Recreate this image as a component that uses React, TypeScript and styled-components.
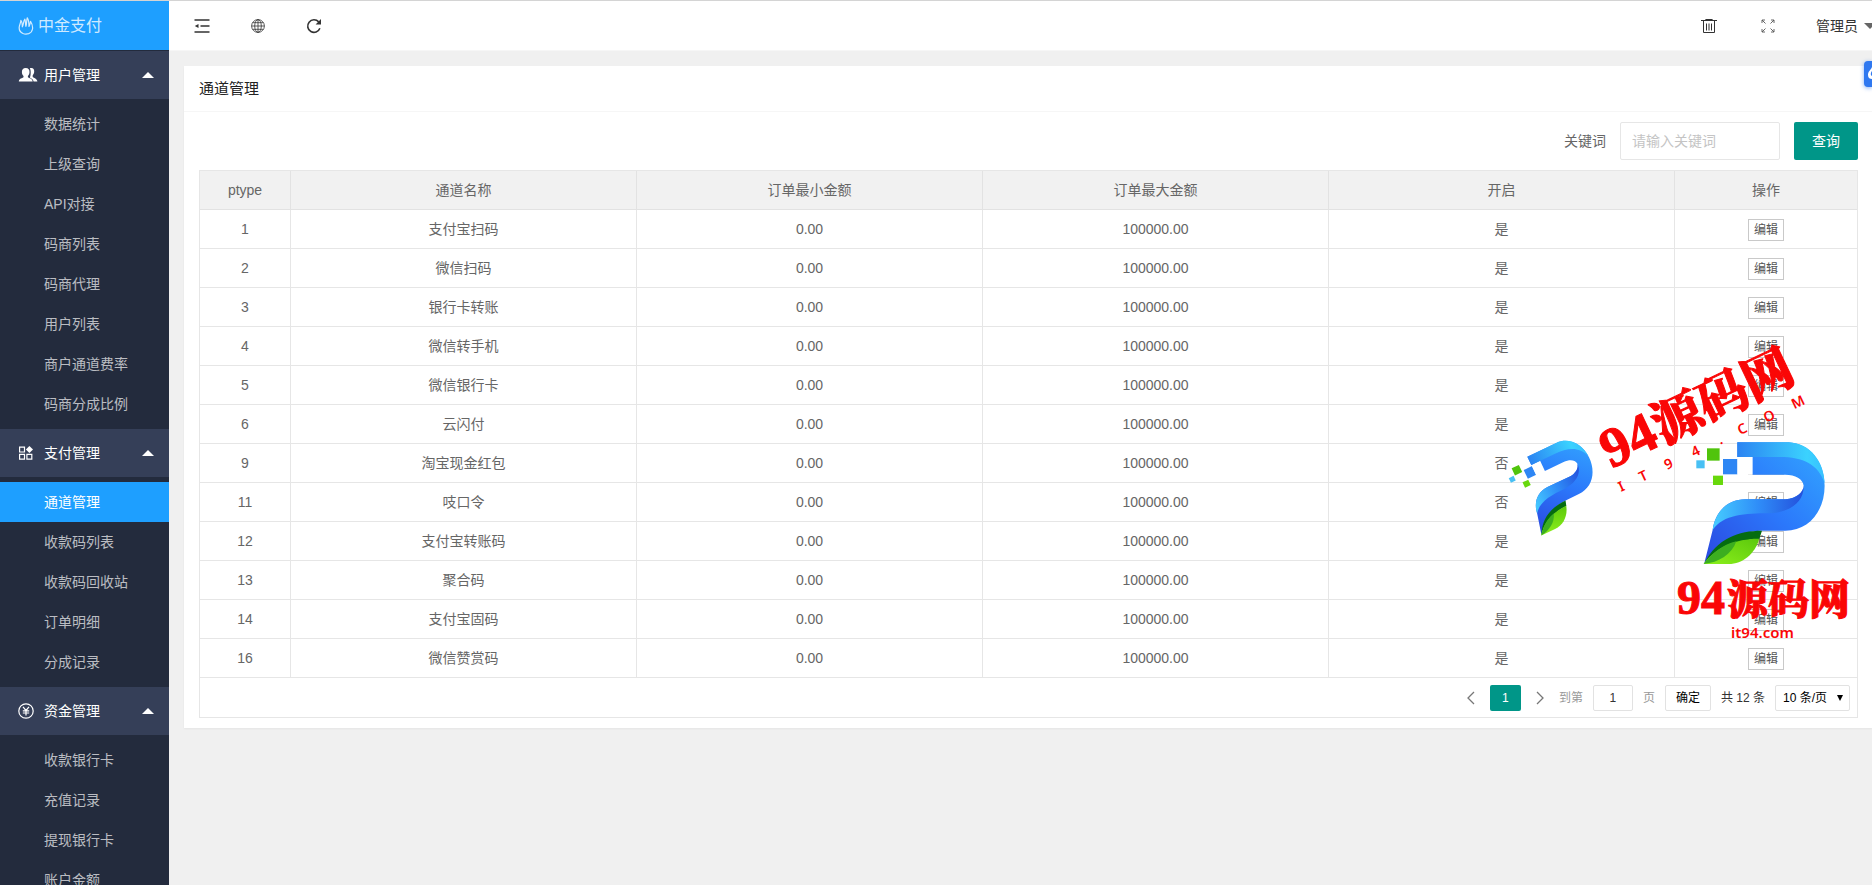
import React from "react";
import styled, { createGlobalStyle } from "styled-components";

const GlobalStyle = createGlobalStyle`
  *, *::before, *::after { box-sizing: border-box; }
  body {
    margin: 0;
    background: #f0f0f0;
    color: #666;
    font: 14px/24px "Liberation Sans", "Noto Sans CJK SC", sans-serif;
  }
  button, input, select { font: inherit; color: inherit; }
  a { color: inherit; text-decoration: none; }
  ul { list-style: none; margin: 0; padding: 0; }
`;

const Shell = styled.div`
  position: relative;
  display: flex;
  height: 100vh;
  overflow: hidden;
  border: 0 solid #d4d4d4;
  border-top-width: 1px;
`;

const Sidebar = styled.aside`
  flex: none;
  width: 169px;
  overflow: hidden;
  background: #232b3d;
`;

const Brand = styled.a`
  display: flex;
  align-items: center;
  gap: 4px;
  height: 49px;
  margin-bottom: 1px;
  padding: 0 18px;
  background: #1e9fff;
  color: rgba(255, 255, 255, 0.8);
  font-size: 16px;
`;

const GroupToggle = styled.button`
  display: flex;
  align-items: center;
  width: 100%;
  height: 48px;
  padding: 0 15px 0 18px;
  border: 0;
  background: #353f58;
  color: #fff;
  text-align: left;
`;

const GroupIcon = styled.span`
  display: flex;
  width: 26px;
`;

const GroupName = styled.span`
  flex: 1;
`;

const SubMenu = styled.ul`
  padding: 5px 0;
`;

const MenuLink = styled.a<{ $active?: boolean }>`
  display: block;
  height: 40px;
  padding-left: 44px;
  line-height: 40px;
  white-space: nowrap;
  background: ${(p) => (p.$active ? "#1e9fff" : "transparent")};
  color: ${(p) => (p.$active ? "#fff" : "rgba(255, 255, 255, 0.7)")};
`;

const Main = styled.main`
  flex: 1;
  min-width: 0;
`;

const Toolbar = styled.header`
  display: flex;
  justify-content: space-between;
  height: 50px;
  padding-left: 5px;
  overflow: hidden;
  background: #fff;
  border-bottom: 1px solid #f6f6f6;
  color: #333;
`;

const Tools = styled.div`
  display: flex;
  align-items: center;
`;

const AccountTools = styled(Tools)`
  gap: 3px;
  margin-right: -4px;
`;

const ToolButton = styled.button`
  display: flex;
  align-items: center;
  justify-content: center;
  width: 56px;
  height: 48px;
  padding: 0;
  border: 0;
  background: none;
`;

const UserButton = styled.button`
  display: flex;
  align-items: center;
  gap: 6px;
  padding: 0 0 0 17px;
  border: 0;
  background: none;
  white-space: nowrap;
`;

const Card = styled.section`
  margin: 15px 0 0 15px;
  background: #fff;
  box-shadow: 0 1px 2px rgba(0, 0, 0, 0.05);
`;

const CardTitle = styled.h1`
  margin: 0;
  padding: 0 15px;
  height: 46px;
  border-bottom: 1px solid #f6f6f6;
  color: #222;
  font-size: 15px;
  font-weight: 400;
  line-height: 46px;
`;

const CardBody = styled.div`
  padding: 10px 14px 10px 15px;
`;

const SearchForm = styled.form`
  display: flex;
  align-items: center;
  justify-content: flex-end;
  gap: 14px;
  margin-bottom: 10px;
`;

const KeywordInput = styled.input`
  width: 160px;
  height: 38px;
  padding: 0 11px;
  border: 1px solid #e6e6e6;
  border-radius: 2px;
  outline: none;
  &::placeholder { color: #c4c4c4; }
`;

const SearchButton = styled.button`
  width: 64px;
  height: 38px;
  padding: 0;
  border: 0;
  border-radius: 2px;
  background: #009688;
  color: #fff;
`;

const TableFrame = styled.div`
  border: 1px solid #e6e6e6;
`;

const DataTable = styled.table`
  width: 100%;
  table-layout: fixed;
  border-collapse: separate;
  border-spacing: 0;
  text-align: center;
`;

const Col = styled.col<{ $width?: number }>`
  width: ${(p) => (p.$width ? `${p.$width}px` : "auto")};
`;

const HeadCell = styled.th`
  height: 39px;
  padding: 0;
  border: 0 solid #e2e2e2;
  border-width: 0 1px 1px 0;
  background: #f1f1f1;
  font-weight: 400;
  &:last-child { border-right: 0; }
`;

const Cell = styled.td`
  height: 39px;
  padding: 0;
  border: 0 solid #e6e6e6;
  border-width: 0 1px 1px 0;
  &:last-child { border-right: 0; }
`;

const EditButton = styled.button`
  display: block;
  width: 36px;
  height: 22px;
  margin: 1px auto 0;
  padding: 0;
  border: 1px solid #c9c9c9;
  background: #fff;
  color: #555;
  font-size: 12px;
  line-height: 20px;
`;

const Pager = styled.nav`
  display: flex;
  align-items: center;
  justify-content: flex-end;
  gap: 10px;
  height: 39px;
  padding: 0 7px;
  color: #333;
  font-size: 12px;
`;

const Muted = styled.label`
  display: flex;
  align-items: center;
  gap: 10px;
  color: #999;
`;

const ArrowButton = styled.button`
  display: flex;
  align-items: center;
  justify-content: center;
  width: 16px;
  height: 26px;
  padding: 0;
  border: 0;
  background: none;
  color: #777;
`;

const PageSteps = styled.div`
  display: flex;
  gap: 11px;
  margin-right: 1px;
`;

const PageNumber = styled.button`
  width: 31px;
  height: 26px;
  padding: 0;
  border: 0;
  border-radius: 2px;
  background: #009688;
  color: #fff;
`;

const PageInput = styled.input`
  width: 40px;
  height: 26px;
  padding: 0;
  border: 1px solid #e2e2e2;
  border-radius: 2px;
  color: #333;
  text-align: center;
`;

const ConfirmButton = styled.button`
  width: 46px;
  height: 26px;
  padding: 0;
  border: 1px solid #e2e2e2;
  border-radius: 2px;
  background: #fff;
  color: #000;
`;

const SelectBox = styled.div`
  position: relative;
  color: #000;
`;

const SizeSelect = styled.select`
  display: block;
  appearance: none;
  width: 75px;
  height: 26px;
  padding: 0 7px;
  border: 1px solid #e2e2e2;
  border-radius: 2px;
  background: #fff;
`;

const SelectArrow = styled.svg`
  position: absolute;
  top: 10px;
  right: 7px;
  pointer-events: none;
`;

const SideTab = styled.button`
  position: absolute;
  top: 60px;
  right: 0;
  display: flex;
  align-items: center;
  width: 8px;
  height: 26px;
  padding: 0;
  border: 0;
  border-radius: 4px 0 0 4px;
  background: #2f78f0;
  box-shadow: 0 1px 4px rgba(47, 120, 240, 0.6);
  overflow: hidden;
`;

const Watermark = styled.svg`
  position: absolute;
  top: 319px;
  right: 0;
  pointer-events: none;
  fill: #fa0606;
`;

const WatermarkText = styled.text<{ $size: number }>`
  font-family: "Liberation Serif", "Noto Serif CJK SC", "Noto Sans CJK SC", serif;
  font-size: ${(p) => p.$size}px;
  font-weight: 900;
  stroke: #fa0606;
  stroke-width: 1px;
`;

const WatermarkUrl = styled.text<{ $size: number }>`
  font-family: "Noto Sans", "Noto Sans CJK SC", sans-serif;
  font-size: ${(p) => p.$size}px;
  font-weight: 600;
`;

const FlameIcon = () => (
  <svg width="16" height="18" viewBox="0 0 16 18" fill="none" stroke="currentColor" strokeWidth="1.2" strokeLinejoin="round" strokeLinecap="round" aria-hidden="true">
    <path d="M5 16.500C2.300 15.300 1 12.800 1.200 10.200C1.400 7.700 2.800 6 2.900 3.300C4 4.500 4.500 6 4.300 9.800C5.500 7.800 5.200 4.500 6.900 2.200C7.600 4 7.300 6.500 7.900 9.300C8.900 6.800 8.300 3.800 9.300 .8C10.900 2.800 10.800 6 11 9.500C12 8 12 6.200 12.500 4.300C14.200 7 14.900 9.600 14.500 12C14.100 14.300 12.700 15.900 10.700 16.600C8.800 17.200 6.700 17.200 5 16.500Z" />
  </svg>
);

const UsersIcon = () => (
  <svg width="20" height="16" viewBox="0 0 20 16" fill="currentColor" aria-hidden="true">
    <path d="M11.800 1.300C14.600 .2 16.500 1.900 16.200 4.800C16.100 6.300 15.500 7.300 14.700 8.200V9.900C15.700 10.800 19 11.200 19.400 14.600H15.600C15.200 12.500 13.300 11.400 11.800 10.600C12.500 9.200 12.700 7.300 12.700 5.300C12.700 3.500 12.400 2.200 11.800 1.300Z" />
    <path d="M7.700 1C10.400 1 11.700 2.700 11.500 5.200C11.400 6.900 10.800 8.100 9.900 9V10.300C11.100 11.300 14.300 11.400 14.700 14.600H.8C1 11.400 4.400 11.300 5.500 10.300V9C4.600 8.100 4 6.900 3.900 5.200C3.800 2.700 5 1 7.700 1Z" />
  </svg>
);

const ComponentsIcon = () => (
  <svg width="16" height="16" viewBox="0 0 16 16" fill="none" stroke="currentColor" strokeWidth="1.200" aria-hidden="true">
    <path d="M1.600 2.200H6.500V7H1.600ZM1.600 9.300H6.500V14.200H1.600ZM8.900 9.300H13.800V14.200H8.900Z" />
    <path d="M11.400 1L15 4.500L11.400 8L7.900 4.500Z" fill="currentColor" stroke="none" />
  </svg>
);

const YenIcon = () => (
  <svg width="16" height="16" viewBox="0 0 16 16" fill="none" stroke="currentColor" strokeWidth="1.200" aria-hidden="true">
    <circle cx="8" cy="8" r="7.200" />
    <path d="M5 3.800L8 7.500L11 3.800M8 7.500V12.500M4.800 7.800H11.200M4.800 10H11.200" />
  </svg>
);

const CaretUp = () => (
  <svg width="12" height="6" viewBox="0 0 12 6" fill="currentColor" aria-hidden="true">
    <path d="M0 6L6 0L12 6Z" />
  </svg>
);

const CollapseIcon = () => (
  <svg width="16" height="16" viewBox="0 0 16 16" stroke="currentColor" strokeWidth="1.400" fill="none" aria-hidden="true">
    <path d="M.5 2H15.500M6.500 8H15.500M.5 14H15.500" />
    <path d="M.8 8L4.500 6V10Z" fill="currentColor" stroke="none" />
  </svg>
);

const GlobeIcon = () => (
  <svg width="14" height="14" viewBox="0 0 14 14" fill="none" stroke="currentColor" strokeWidth="0.800" aria-hidden="true">
    <circle cx="7" cy="7" r="6.400" />
    <ellipse cx="7" cy="7" rx="3.300" ry="6.400" />
    <path d="M7 .6V13.400M.6 7H13.400M1.600 3.700H12.400M1.600 10.300H12.400" />
  </svg>
);

const RefreshIcon = () => (
  <svg width="16" height="16" viewBox="0 0 16 16" fill="none" stroke="currentColor" strokeWidth="1.600" aria-hidden="true">
    <path d="M13.900 10.300A6.300 6.300 0 1 1 12.700 3.900" />
    <path d="M15 1V6.400H9.600Z" fill="currentColor" stroke="none" />
  </svg>
);

const TrashIcon = () => (
  <svg width="16" height="16" viewBox="0 0 16 16" fill="none" stroke="currentColor" strokeWidth="1" aria-hidden="true">
    <path d="M0 2.500H16M5 2.500V1.500H11V2.500" strokeWidth="1.200" />
    <path d="M2.500 3V14.500H13.500V3M5.500 5.500V12.500M8 5.500V12.500M10.500 5.500V12.500" />
  </svg>
);

const FullscreenIcon = () => (
  <svg width="14" height="14" viewBox="0 0 14 14" fill="none" stroke="#555" strokeWidth="0.900" aria-hidden="true">
    <path d="M1 4V1H4M1 1L4.500 4.500M10 1H13V4M13 1L9.500 4.500M1 10V13H4M1 13L4.500 9.500M13 10V13H10M13 13L9.500 9.500" />
  </svg>
);

const CaretDown = () => (
  <svg width="12" height="6" viewBox="0 0 12 6" fill="#666" aria-hidden="true">
    <path d="M0 0H12L6 6Z" />
  </svg>
);

const Chevron = ({ d }: { d: string }) => (
  <svg width="8" height="14" viewBox="0 0 8 14" fill="none" stroke="currentColor" strokeWidth="1.300" aria-hidden="true">
    <path d={d} />
  </svg>
);

const LogoDefs = () => (
  <defs>
    <linearGradient id="body" x1="0" y1="1" x2="1" y2="0">
      <stop offset="0" stopColor="#2b48e0" />
      <stop offset="0.5" stopColor="#2b78fb" />
      <stop offset="1" stopColor="#33a8ff" />
    </linearGradient>
    <linearGradient id="crown" x1="0" y1="0" x2="1" y2="0">
      <stop offset="0" stopColor="#2b84f2" />
      <stop offset="0.8" stopColor="#3bd2fe" />
      <stop offset="1" stopColor="#38c0ff" />
    </linearGradient>
    <linearGradient id="fold" x1="0" y1="0" x2="1" y2="0">
      <stop offset="0" stopColor="#46cdff" />
      <stop offset="0.5" stopColor="#2f8df8" />
      <stop offset="1" stopColor="#2450dc" />
    </linearGradient>
    <linearGradient id="leaf" x1="0" y1="1" x2="1" y2="0">
      <stop offset="0" stopColor="#8cf01c" />
      <stop offset="1" stopColor="#5cc80c" />
    </linearGradient>
  </defs>
);

const LogoMark = ({ transform }: { transform: string }) => (
  <g transform={transform}>
    <path fill="#50c40c" d="M705 385H743V422H705Z" />
    <path fill="#48c0f4" d="M673 421H698V445H673Z" />
    <path fill="#2e86f4" d="M753 417H797V463H753Z" />
    <path fill="#68d80c" d="M723 467H753V495H723Z" />
    <path fill="#fff" d="M796 411H842V464H796Z" />
    <path fill="url(#body)" d="M796 367H950C1015 370 1058 428 1058 497C1058 572 1012 632 940 632H868C800 634 740 665 697 730L722 630C730 572 770 538 820 538H940C975 535 995 515 995 497C993 477 970 464 940 464H842V411H796Z" />
    <path fill="url(#crown)" d="M796 367H950C1015 370 1056 425 1058 490C1040 432 990 410 920 411H796Z" />
    <path fill="url(#fold)" d="M722 630C730 572 770 538 820 538H940C975 535 995 515 995 497C997 545 955 578 890 580C820 580 755 583 722 630Z" />
    <path fill="#056c10" d="M870 632C800 632 735 655 697 730C740 685 795 657 862 657Z" />
    <path fill="url(#leaf)" d="M862 656C850 700 812 732 770 732H695C732 680 795 655 862 656Z" />
    <path fill="#3cae20" d="M695 732C740 728 780 703 793 664C750 675 720 700 695 732Z" />
  </g>
);

const urlLetters = [
  { ch: "I", x: 0 }, { ch: "T", x: 23 }, { ch: "9", x: 51 }, { ch: "4", x: 81 },
  { ch: ".", x: 110 }, { ch: "C", x: 132 }, { ch: "O", x: 161 }, { ch: "M", x: 192 },
];

const groups = [
  {
    name: "用户管理",
    icon: <UsersIcon />,
    items: ["数据统计", "上级查询", "API对接", "码商列表", "码商代理", "用户列表", "商户通道费率", "码商分成比例"],
  },
  {
    name: "支付管理",
    icon: <ComponentsIcon />,
    items: ["通道管理", "收款码列表", "收款码回收站", "订单明细", "分成记录"],
  },
  {
    name: "资金管理",
    icon: <YenIcon />,
    items: ["收款银行卡", "充值记录", "提现银行卡", "账户金额"],
  },
];

const channels: [number, string, boolean][] = [
  [1, "支付宝扫码", true],
  [2, "微信扫码", true],
  [3, "银行卡转账", true],
  [4, "微信转手机", true],
  [5, "微信银行卡", true],
  [6, "云闪付", true],
  [9, "淘宝现金红包", false],
  [11, "吱口令", false],
  [12, "支付宝转账码", true],
  [13, "聚合码", true],
  [14, "支付宝固码", true],
  [16, "微信赞赏码", true],
];

export default function App() {
  return (
    <>
      <GlobalStyle />
      <Shell>
        <Sidebar>
          <Brand href="#"><FlameIcon />中金支付</Brand>
          <nav>
            {groups.map((g) => (
              <div key={g.name}>
                <GroupToggle type="button" aria-expanded="true">
                  <GroupIcon>{g.icon}</GroupIcon>
                  <GroupName>{g.name}</GroupName>
                  <CaretUp />
                </GroupToggle>
                <SubMenu>
                  {g.items.map((item) => (
                    <li key={item}>
                      <MenuLink href="#" $active={item === "通道管理"}>{item}</MenuLink>
                    </li>
                  ))}
                </SubMenu>
              </div>
            ))}
          </nav>
        </Sidebar>

        <Main>
          <Toolbar>
            <Tools>
              <ToolButton type="button" aria-label="侧边伸缩"><CollapseIcon /></ToolButton>
              <ToolButton type="button" aria-label="前台"><GlobeIcon /></ToolButton>
              <ToolButton type="button" aria-label="刷新"><RefreshIcon /></ToolButton>
            </Tools>
            <AccountTools>
              <ToolButton type="button" aria-label="清除缓存"><TrashIcon /></ToolButton>
              <ToolButton type="button" aria-label="全屏"><FullscreenIcon /></ToolButton>
              <UserButton type="button">管理员<CaretDown /></UserButton>
            </AccountTools>
          </Toolbar>

          <Card>
            <CardTitle>通道管理</CardTitle>
            <CardBody>
              <SearchForm onSubmit={(e) => e.preventDefault()}>
                <label htmlFor="keyword">关键词</label>
                <KeywordInput id="keyword" type="text" placeholder="请输入关键词" />
                <SearchButton type="submit">查询</SearchButton>
              </SearchForm>
              <TableFrame>
                <DataTable>
                  <colgroup>
                    <Col $width={91} />
                    <Col />
                    <Col />
                    <Col />
                    <Col />
                    <Col $width={182} />
                  </colgroup>
                  <thead>
                    <tr>
                      {["ptype", "通道名称", "订单最小金额", "订单最大金额", "开启", "操作"].map((h) => (
                        <HeadCell key={h} scope="col">{h}</HeadCell>
                      ))}
                    </tr>
                  </thead>
                  <tbody>
                    {channels.map(([id, name, on]) => (
                      <tr key={id}>
                        <Cell>{id}</Cell>
                        <Cell>{name}</Cell>
                        <Cell>0.00</Cell>
                        <Cell>100000.00</Cell>
                        <Cell>{on ? "是" : "否"}</Cell>
                        <Cell><EditButton type="button">编辑</EditButton></Cell>
                      </tr>
                    ))}
                  </tbody>
                </DataTable>
                <Pager aria-label="分页">
                  <PageSteps>
                    <ArrowButton type="button" aria-label="上一页"><Chevron d="M7 1L1 7L7 13" /></ArrowButton>
                    <PageNumber type="button">1</PageNumber>
                    <ArrowButton type="button" aria-label="下一页"><Chevron d="M1 1L7 7L1 13" /></ArrowButton>
                  </PageSteps>
                  <Muted>到第<PageInput type="text" defaultValue="1" />页</Muted>
                  <ConfirmButton type="button">确定</ConfirmButton>
                  <span>共 12 条</span>
                  <SelectBox>
                    <SizeSelect aria-label="每页条数" defaultValue="10">
                      <option value="10">10 条/页</option>
                      <option value="20">20 条/页</option>
                      <option value="50">50 条/页</option>
                    </SizeSelect>
                    <SelectArrow width="6" height="6" viewBox="0 0 6 6" fill="currentColor" aria-hidden="true">
                      <path d="M0 0H6L3 6Z" />
                    </SelectArrow>
                  </SelectBox>
                </Pager>
              </TableFrame>
            </CardBody>
          </Card>
        </Main>

        <SideTab type="button" aria-label="工具">
          <svg width="8" height="16" viewBox="0 0 8 16" fill="#fff" aria-hidden="true">
            <path d="M8 1C7 4 4 5 4 9C4 12 6 13 8 13V10C6 9 7 6 8 5Z" />
          </svg>
        </SideTab>

        <Watermark width="400" height="330" viewBox="0 0 400 330">
          <LogoDefs />
          <LogoMark transform="scale(0.3333) translate(166 410) rotate(-25.5) scale(0.634) translate(-796 -367)" />
          <g transform="translate(139 149) rotate(-25.5)">
            <WatermarkText $size={56}>94</WatermarkText>
            <WatermarkText x="57" $size={50}>源码网</WatermarkText>
          </g>
          <g transform="translate(149 172) rotate(-25.5)">
            {urlLetters.map((l) => (
              <WatermarkUrl key={l.ch} x={l.x} $size={14}>{l.ch}</WatermarkUrl>
            ))}
          </g>
          <LogoMark transform="scale(0.3333)" />
          <WatermarkText x="205" y="294" $size={48}>94</WatermarkText>
          <WatermarkText x="255" y="294" $size={41}>源码网</WatermarkText>
          <WatermarkUrl x="259" y="318" $size={15}>it94.com</WatermarkUrl>
        </Watermark>
      </Shell>
    </>
  );
}
